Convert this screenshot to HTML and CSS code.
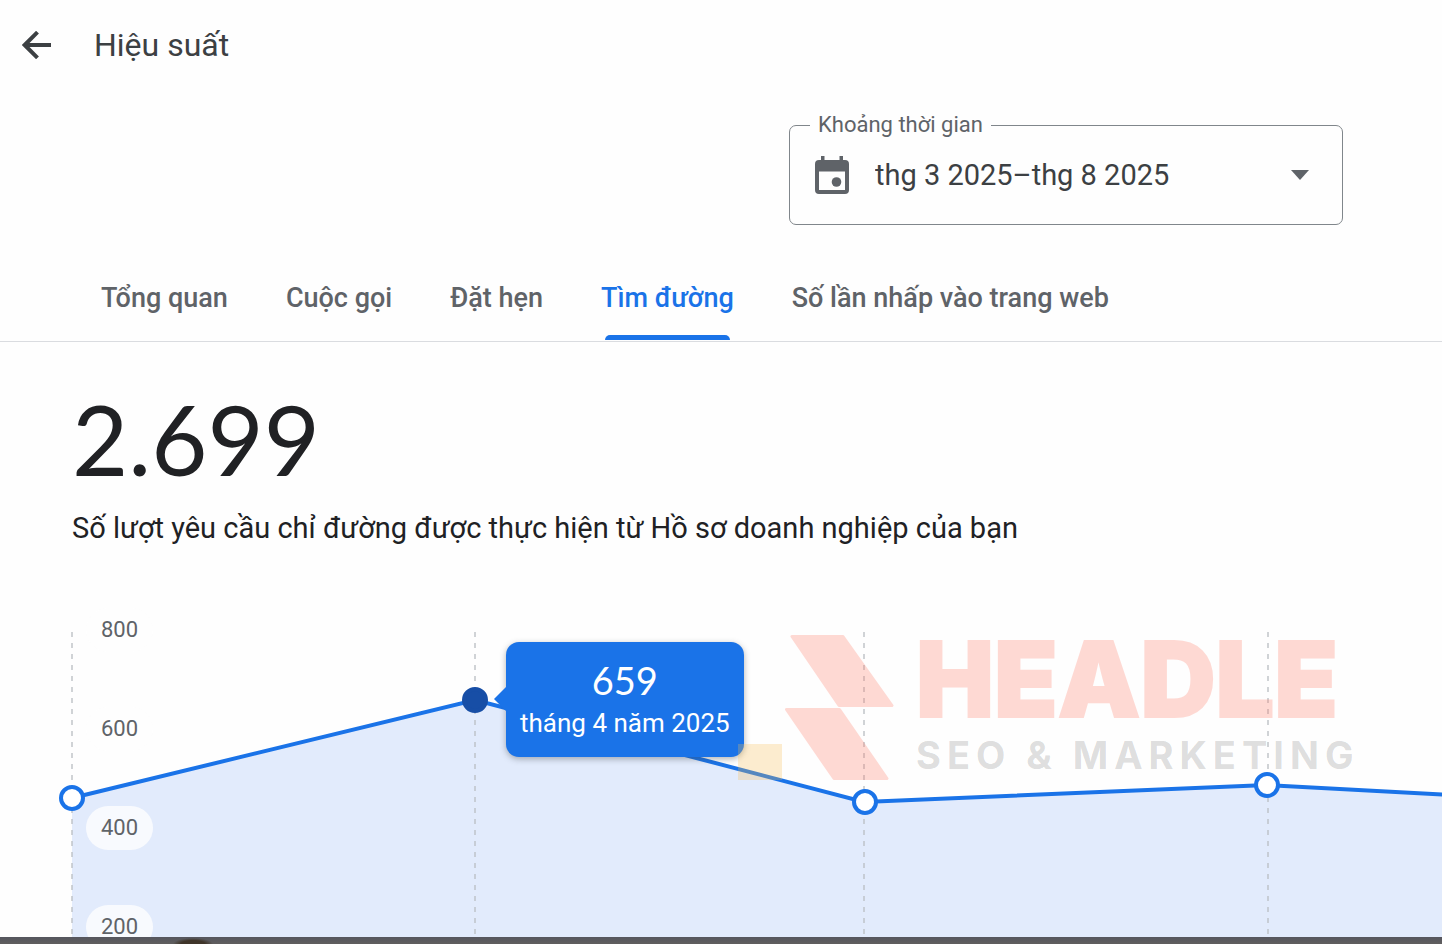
FILE: index.html
```html
<!DOCTYPE html>
<html lang="vi">
<head>
    <meta charset="UTF-8">
    <meta name="viewport" content="width=device-width, initial-scale=1.0">
    <title>Hiệu suất</title>
    <link rel="stylesheet" href="styles.css">
</head>
<body>
    <header class="topbar">
        <button type="button" class="back-button" aria-label="Quay lại">
            <svg width="30" height="28" viewBox="0 0 30 28" fill="none" stroke="#3c4043" stroke-width="4">
                <path d="M29 14H3M15.500 1.200L2.700 14l12.800 12.800"/>
            </svg>
        </button>
        <h1 class="page-title">Hiệu suất</h1>
    </header>

    <div class="filter-row">
        <fieldset class="date-field">
            <legend><label for="dateRange">Khoảng thời gian</label></legend>
            <svg class="calendar-icon" width="34" height="38" viewBox="0 0 34 38" fill="#5f6368">
                <path fill-rule="evenodd" d="M6 0h3.500v4h15V0H28v4h2a4 4 0 0 1 4 4v26a4 4 0 0 1-4 4H4a4 4 0 0 1-4-4V8a4 4 0 0 1 4-4h2zM4 15.500V34h26V15.500z"/>
                <circle cx="21.500" cy="26" r="4.800"/>
            </svg>
            <select id="dateRange">
                <option>thg 3 2025–thg 8 2025</option>
            </select>
            <svg class="arrow-icon" width="18" height="10" viewBox="0 0 18 10" fill="#5f6368">
                <path d="M0 0h18L9 10z"/>
            </svg>
        </fieldset>
    </div>

    <nav class="tabs">
        <a href="#overview" class="tab">Tổng quan</a>
        <a href="#calls" class="tab">Cuộc gọi</a>
        <a href="#bookings" class="tab">Đặt hẹn</a>
        <a href="#directions" class="tab active" aria-current="page">Tìm đường</a>
        <a href="#clicks" class="tab">Số lần nhấp vào trang web</a>
    </nav>

    <section class="summary">
        <div class="total">2.699</div>
        <p class="total-label">Số lượt yêu cầu chỉ đường được thực hiện từ Hồ sơ doanh nghiệp của bạn</p>
    </section>

    <section class="chart">
        <svg class="plot" width="1700" height="420">
            <path class="area" d="M72 198L475 100L864 202L1267 185L1670 207V420H72z"/>
            <path class="grid" d="M72 32V420M475 32V420M864 32V420M1268 32V420"/>
            <path class="line" d="M72 198L475 100L864 202L1267 185L1670 207"/>
            <circle class="point" cx="72" cy="198" r="11"/>
            <circle class="point selected" cx="475" cy="100" r="11"/>
            <circle class="point" cx="865" cy="202" r="11"/>
            <circle class="point" cx="1267" cy="185" r="11"/>
        </svg>

        <div class="axis">
            <span class="tick">800</span>
            <span class="tick">600</span>
            <span class="tick">400</span>
            <span class="tick">200</span>
        </div>

        <div class="tooltip">
            <div class="tooltip-value">659</div>
            <div class="tooltip-date">tháng 4 năm 2025</div>
        </div>

        <div class="watermark">
            <svg class="watermark-logo" width="158" height="146" viewBox="0 0 158 146">
                <path fill="#f9bb50" opacity=".27" d="M0 110h44v36H0z"/>
                <g fill="#ff735c" stroke="#ff735c" stroke-width="3" stroke-linejoin="round">
                    <path d="M54 2.500h51l49 69h-33h-20z"/>
                    <path d="M48.500 75.500h53l47.500 69h-53z"/>
                </g>
            </svg>
            <div class="watermark-text">
                <div class="watermark-name">HEADLE</div>
                <div class="watermark-tagline">SEO &amp; MARKETING</div>
            </div>
        </div>
    </section>

    <div class="bottom-strip"></div>
</body>
</html>
```

FILE: styles.css
```css
* {
    box-sizing: border-box;
}
body {
    display: flex;
    flex-direction: column;
    height: 100vh;
    margin: 0;
    overflow: hidden;
    background: #fefefe;
    color: #202124;
    font-family: Roboto, "Noto Sans", sans-serif;
}
.topbar {
    display: flex;
    align-items: center;
    gap: 42px;
    height: 90px;
    padding: 0 22px;
}
.back-button {
    display: flex;
    padding: 0;
    border: 0;
    background: none;
}
.page-title {
    margin: 0;
    color: #3c4043;
    font-size: 32px;
    font-weight: 400;
}
.filter-row {
    display: flex;
    justify-content: flex-end;
    padding: 22px 99px 0 0;
}
.date-field {
    display: flex;
    align-items: center;
    width: 554px;
    height: 113px;
    margin: 0;
    padding: 0 33px 12px 25px;
    border: 1px solid #80868b;
    border-radius: 7px;
}
.date-field legend {
    margin-left: -5px;
    padding: 0 8px;
    color: #5f6368;
    font-size: 22px;
    line-height: 26px;
}
.calendar-icon {
    flex: none;
}
.date-field select {
    flex: 1;
    padding: 0 0 0 26px;
    border: 0;
    background: none;
    color: #3c4043;
    font: 400 29px Roboto, sans-serif;
    appearance: none;
}
.arrow-icon {
    flex: none;
    pointer-events: none;
}
.tabs {
    display: flex;
    gap: 58px;
    height: 117px;
    padding: 0 101px;
    border-bottom: 1px solid #dadce0;
}
.tab {
    display: flex;
    position: relative;
    align-items: flex-end;
    padding-bottom: 27px;
    color: #5f6368;
    font-size: 27px;
    font-weight: 500;
    line-height: 32px;
    text-decoration: none;
    white-space: nowrap;
}
.tab.active {
    color: #1a73e8;
}
.tab.active::after {
    content: "";
    position: absolute;
    right: 4px;
    bottom: 1px;
    left: 4px;
    height: 5px;
    border-radius: 5px 5px 0 0;
    background: #1a73e8;
}
.summary {
    padding: 39px 72px 0;
}
.total {
    font-family: Lato, Roboto, sans-serif;
    font-size: 97px;
    line-height: 116px;
}
.total-label {
    margin: 13px 0 0;
    font-size: 29px;
    line-height: 36px;
}
.chart {
    position: relative;
    flex: 1;
    min-height: 0;
    margin-top: 54px;
    overflow: hidden;
}
.plot {
    display: block;
}
.area {
    fill: #e2ebfc;
}
.grid {
    stroke: #bdc1c6;
    stroke-width: 2;
    stroke-dasharray: 5 6;
    opacity: .7;
}
.line {
    fill: none;
    stroke: #1a73e8;
    stroke-width: 4;
}
.point {
    fill: #fff;
    stroke: #1a73e8;
    stroke-width: 4;
}
.point.selected {
    fill: #174ea6;
    stroke: #174ea6;
}
.axis {
    display: flex;
    position: absolute;
    top: 8px;
    left: 86px;
    flex-direction: column;
    gap: 55px;
}
.tick {
    padding: 0 15px;
    border-radius: 22px;
    background: rgba(254, 254, 254, .8);
    color: #5f6368;
    font-size: 22px;
    line-height: 44px;
}
.tooltip {
    position: absolute;
    top: 42px;
    left: 506px;
    padding: 16px 14px 12px;
    border-radius: 13px;
    background: #1a73e8;
    box-shadow: 0 2px 6px rgba(60, 64, 67, .4);
    color: #fff;
    text-align: center;
}
.tooltip::before {
    content: "";
    position: absolute;
    top: 45px;
    left: -12px;
    border: 12px solid transparent;
    border-right-color: #1a73e8;
    border-left: 0;
}
.tooltip-value {
    font-family: Lato, Roboto, sans-serif;
    font-size: 38px;
    line-height: 44px;
}
.tooltip-date {
    font-size: 26px;
    line-height: 43px;
}
.watermark {
    display: flex;
    position: absolute;
    top: 34px;
    left: 738px;
    gap: 20px;
    font-family: Inter, sans-serif;
    pointer-events: none;
}
.watermark-logo g {
    opacity: .26;
}
.watermark-name {
    color: #ff735c;
    font-size: 104px;
    font-weight: 900;
    line-height: 90px;
    opacity: .26;
    -webkit-text-stroke: 2px #ff735c;
}
.watermark-tagline {
    color: rgba(60, 60, 60, .18);
    font-size: 38px;
    font-weight: 700;
    letter-spacing: 6px;
    line-height: 62px;
}
.bottom-strip {
    flex: none;
    height: 7px;
    background: radial-gradient(ellipse 20px 6px at 193px 7px, #3f352a 60%, transparent), linear-gradient(#55565e, #605e5e);
}
```
